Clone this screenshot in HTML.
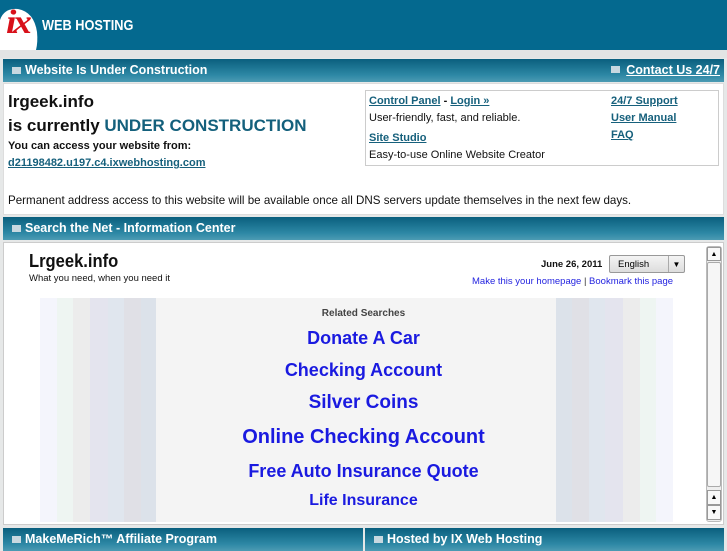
<!DOCTYPE html>
<html><head><style>
*{margin:0;padding:0;box-sizing:border-box}
body{width:727px;height:545px;overflow:hidden;background:#e6e8e8;font-family:"Liberation Sans",sans-serif;position:relative}
.hdr{position:absolute;left:0;top:0;width:727px;height:50px;background:#04698f;overflow:hidden}
.bar{position:absolute;height:23px;background:linear-gradient(#0a5f7e,#2d88a5 70%,#4c9bb3);color:#fff;font-weight:bold;font-size:12.5px;line-height:23px;padding-left:22px}
.bar:before{content:"";position:absolute;left:9px;top:8px;width:9px;height:7px;background:#c8d8e0}
.box{position:absolute;background:#fff;border:1px solid #ccc}
a,.lk{color:#16607c;text-decoration:underline;font-weight:bold}
.b{position:absolute;font-size:11px;color:#111}
.rs{position:absolute;left:0;width:727px;text-align:center;color:#1a1ae0;font-weight:bold}
.st{position:absolute;top:298px;height:224px}
</style></head><body>
<div class="hdr">
<svg style="position:absolute;left:0;top:0" width="50" height="50"><path d="M0 20 Q4 8 18 9 Q34 12 37 32 Q38 42 36 50 L0 50Z" fill="#fff"/></svg>
<div style="position:absolute;left:7px;top:4px;font:italic bold 34px 'Liberation Serif',serif;color:#d8101a;letter-spacing:-3px;transform:scaleX(1.1)">ix</div>
<div style="position:absolute;left:42px;top:17px;font:bold 15px 'Liberation Sans',sans-serif;color:#fff;transform:scaleX(.85);transform-origin:left">WEB HOSTING</div>
</div>
<div style="position:absolute;left:0;top:50px;width:727px;height:8px;background:#e2e4e4"></div>
<div class="bar" style="left:3px;top:59px;width:721px">Website Is Under Construction<span style="position:absolute;right:4px;text-decoration:underline">Contact Us 24/7</span></div>
<div style="position:absolute;left:611px;top:66px;width:9px;height:7px;background:#c8d8e0"></div>
<div class="box" style="left:3px;top:83px;width:721px;height:132px;border-color:#ddd"></div>
<div class="b" style="left:8px;top:92px;font-size:17px;font-weight:bold">lrgeek.info</div>
<div class="b" style="left:8px;top:116px;font-size:17px;font-weight:bold">is currently <span style="color:#14607c">UNDER CONSTRUCTION</span></div>
<div class="b" style="left:8px;top:140px;font-weight:bold">You can access your website from:</div>
<div class="b" style="left:8px;top:157px"><span class="lk">d21198482.u197.c4.ixwebhosting.com</span></div>
<div class="box" style="left:365px;top:90px;width:354px;height:76px"></div>
<div class="b" style="left:369px;top:95px"><span class="lk">Control Panel</span> <b>-</b> <span class="lk">Login »</span></div>
<div class="b" style="left:369px;top:112px">User-friendly, fast, and reliable.</div>
<div class="b" style="left:369px;top:132px"><span class="lk">Site Studio</span></div>
<div class="b" style="left:369px;top:149px">Easy-to-use Online Website Creator</div>
<div class="b" style="left:611px;top:95px"><span class="lk">24/7 Support</span></div>
<div class="b" style="left:611px;top:112px"><span class="lk">User Manual</span></div>
<div class="b" style="left:611px;top:129px"><span class="lk">FAQ</span></div>
<div class="b" style="left:8px;top:194px;font-size:11.6px">Permanent address access to this website will be available once all DNS servers update themselves in the next few days.</div>
<div class="bar" style="left:3px;top:217px;width:721px">Search the Net - Information Center</div>
<div class="box" style="left:3px;top:242px;width:721px;height:283px;border-color:#ccc"></div>
<div class="b" style="left:29px;top:251px;font-size:18px;font-weight:bold;transform:scaleX(.92);transform-origin:left">Lrgeek.info</div>
<div class="b" style="left:29px;top:273px;font-size:9.5px">What you need, when you need it</div>
<div class="b" style="left:541px;top:259px;font-size:9.5px;font-weight:bold">June 26, 2011</div>
<div style="position:absolute;left:609px;top:255px;width:76px;height:18px;border:1px solid #999;border-radius:2px;background:linear-gradient(#f4f4f4,#ddd);font-size:9.5px;line-height:17px;padding-left:8px">English<span style="position:absolute;right:0;top:0;width:16px;height:16px;border-left:1px solid #aaa;text-align:center;font-size:8px">▼</span></div>
<div class="b" style="left:472px;top:276px;font-size:9.5px;color:#2424e0">Make this your homepage <span style="color:#333">|</span> Bookmark this page</div>
<div style="position:absolute;left:40px;top:298px;width:633px;height:224px;background:#f4f4f4"></div>
<div class="st" style="left:40px;width:17px;background:#f4f5fc"></div>
<div class="st" style="left:57px;width:16px;background:#eef5f2"></div>
<div class="st" style="left:73px;width:17px;background:#ececec"></div>
<div class="st" style="left:90px;width:18px;background:#e4e4ee"></div>
<div class="st" style="left:108px;width:16px;background:#e0e6ee"></div>
<div class="st" style="left:124px;width:17px;background:#e0e0e6"></div>
<div class="st" style="left:141px;width:15px;background:#dce2ea"></div>
<div class="st" style="left:556px;width:16px;background:#dce2ea"></div>
<div class="st" style="left:572px;width:17px;background:#e0e0e6"></div>
<div class="st" style="left:589px;width:16px;background:#e0e6ee"></div>
<div class="st" style="left:605px;width:18px;background:#e4e4ee"></div>
<div class="st" style="left:623px;width:17px;background:#ececec"></div>
<div class="st" style="left:640px;width:16px;background:#eef5f2"></div>
<div class="st" style="left:656px;width:17px;background:#f4f5fc"></div>
<div class="rs" style="top:308px;font-size:10px;color:#444">Related Searches</div>
<div class="rs" style="top:328px;font-size:18px">Donate A Car</div>
<div class="rs" style="top:360px;font-size:18px">Checking Account</div>
<div class="rs" style="top:392px;font-size:19px">Silver Coins</div>
<div class="rs" style="top:426px;font-size:20px">Online Checking Account</div>
<div class="rs" style="top:461px;font-size:18px">Free Auto Insurance Quote</div>
<div class="rs" style="top:492px;font-size:16px">Life Insurance</div>
<div style="position:absolute;left:706px;top:246px;width:16px;height:276px;background:#eee;border:1px solid #bbb;border-radius:3px"></div>
<div style="position:absolute;left:707px;top:247px;width:14px;height:14px;background:#f8f8f8;border:1px solid #999;font-size:7px;text-align:center;line-height:13px">▲</div>
<div style="position:absolute;left:707px;top:262px;width:14px;height:225px;background:#f6f6f6;border:1px solid #aaa;border-radius:2px"></div>
<div style="position:absolute;left:707px;top:490px;width:14px;height:15px;background:#f8f8f8;border:1px solid #999;font-size:7px;text-align:center;line-height:14px">▲</div>
<div style="position:absolute;left:707px;top:505px;width:14px;height:15px;background:#f8f8f8;border:1px solid #999;font-size:7px;text-align:center;line-height:14px">▼</div>
<div class="bar" style="left:3px;top:528px;width:360px">MakeMeRich™ Affiliate Program</div>
<div class="bar" style="left:365px;top:528px;width:359px">Hosted by IX Web Hosting</div>
</body></html>
